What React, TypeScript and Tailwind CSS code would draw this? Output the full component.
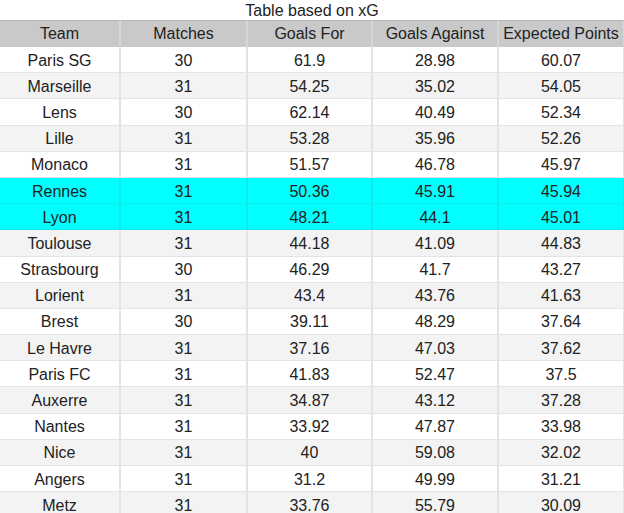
const rows: [string, number, number, number, number][] = [
  ["Paris SG", 30, 61.9, 28.98, 60.07],
  ["Marseille", 31, 54.25, 35.02, 54.05],
  ["Lens", 30, 62.14, 40.49, 52.34],
  ["Lille", 31, 53.28, 35.96, 52.26],
  ["Monaco", 31, 51.57, 46.78, 45.97],
  ["Rennes", 31, 50.36, 45.91, 45.94],
  ["Lyon", 31, 48.21, 44.1, 45.01],
  ["Toulouse", 31, 44.18, 41.09, 44.83],
  ["Strasbourg", 30, 46.29, 41.7, 43.27],
  ["Lorient", 31, 43.4, 43.76, 41.63],
  ["Brest", 30, 39.11, 48.29, 37.64],
  ["Le Havre", 31, 37.16, 47.03, 37.62],
  ["Paris FC", 31, 41.83, 52.47, 37.5],
  ["Auxerre", 31, 34.87, 43.12, 37.28],
  ["Nantes", 31, 33.92, 47.87, 33.98],
  ["Nice", 31, 40, 59.08, 32.02],
  ["Angers", 31, 31.2, 49.99, 31.21],
  ["Metz", 31, 33.76, 55.79, 30.09],
];

const headers = ["Team", "Matches", "Goals For", "Goals Against", "Expected Points"];
const highlighted = ["Rennes", "Lyon"];

export default function App() {
  return (
    <div className="w-[624px] h-[513px] overflow-hidden bg-white text-[#222] font-['Liberation_Sans',Arial,sans-serif]">
      <div className="h-[20px] flex items-center justify-center text-[16px] leading-none pt-[1px]">
        Table based on xG
      </div>
      <div className="w-[625px] grid grid-cols-[121px_127px_125px_126px_126px]">
        {headers.map((h) => (
          <div
            key={h}
            className="h-[27px] flex items-center justify-center bg-[#c9c9c9] border-t border-t-[#b8b8b8] border-r-2 border-r-[#d6d6d6] text-[16px] whitespace-nowrap"
          >
            {h}
          </div>
        ))}
        {rows.map((r, i) => {
          const hl = highlighted.includes(r[0]);
          const bg = hl ? "bg-[#00ffff] border-[#12eaea]" : i % 2 === 1 ? "bg-[#f3f3f3] border-[#e3e3e3]" : "bg-white border-[#e3e3e3]";
          return r.map((v, j) => (
            <div
              key={`${i}-${j}`}
              className={`h-[26.2px] flex items-center justify-center pt-[2px] border-r-2 border-b text-[16px] ${bg}`}
            >
              {v}
            </div>
          ));
        })}
      </div>
    </div>
  );
}
